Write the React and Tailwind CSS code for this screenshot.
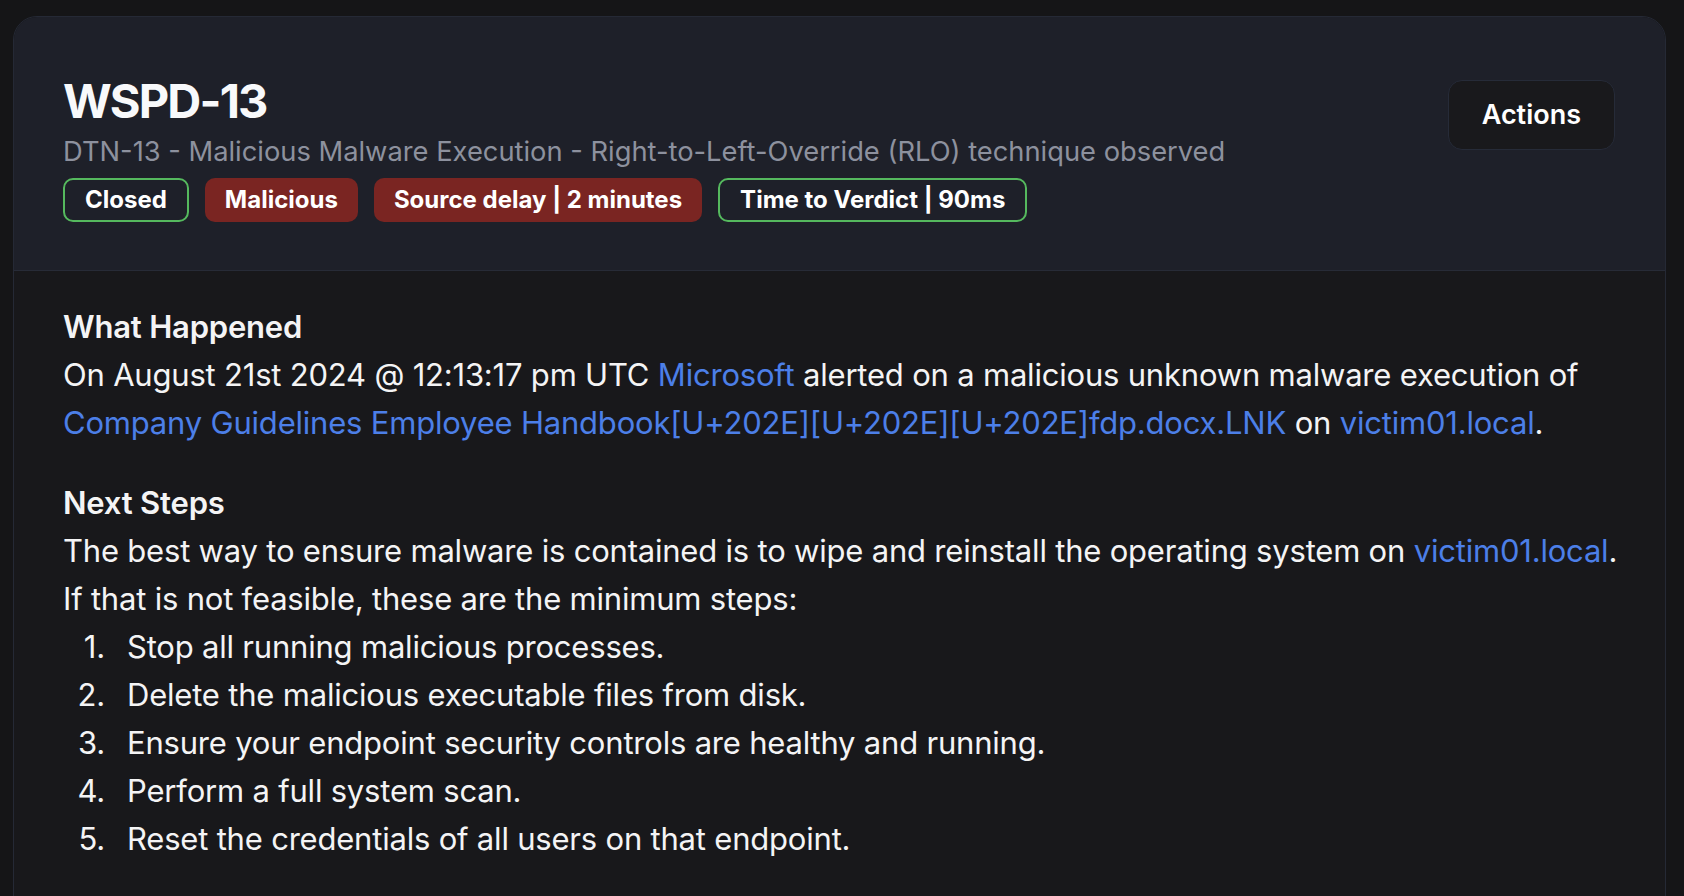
import React from 'react';

const badges = [
  { label: 'Closed', tone: 'outline' },
  { label: 'Malicious', tone: 'red' },
  { label: 'Source delay | 2 minutes', tone: 'red' },
  { label: 'Time to Verdict | 90ms', tone: 'outline' },
];

const steps = [
  'Stop all running malicious processes.',
  'Delete the malicious executable files from disk.',
  'Ensure your endpoint security controls are healthy and running.',
  'Perform a full system scan.',
  'Reset the credentials of all users on that endpoint.',
];

function Link({ children }) {
  return <span className="text-[#4c7fe8]">{children}</span>;
}

export default function App() {
  return (
    <div className="min-h-screen bg-[#151517] pt-4 pl-[13px] pr-[18px] font-['Inter',sans-serif]">
      <div className="rounded-t-[24px] border border-[#252935] overflow-hidden">
        {/* Header */}
        <div className="bg-[#1e2029] border-b border-[#272b37] flex justify-between items-start pl-[49px] pr-[50px] pt-[60px] pb-[48px]">
          <div>
            <h1 className="text-[47px] leading-none font-bold text-[#f8f9fb] tracking-[-1.8px]">WSPD-13</h1>
            <p className="mt-[12px] text-[27.3px] leading-[32px] text-[#8d919e]">
              DTN-13 - Malicious Malware Execution - Right-to-Left-Override (RLO) technique observed
            </p>
            <div className="mt-[10px] flex gap-4">
              {badges.map((b) => (
                <span
                  key={b.label}
                  className={`h-[44px] px-[20px] flex items-center rounded-[10px] text-[24px] font-bold text-white ${
                    b.tone === 'red'
                      ? 'bg-[#7a2522]'
                      : 'border-2 border-[#55b95e] bg-[#1e2029]'
                  }`}
                >
                  {b.label}
                </span>
              ))}
            </div>
          </div>
          <button className="mt-[3px] h-[70px] px-[33px] rounded-[14px] border border-[#262b38] bg-[#19191c] text-white text-[27px] font-semibold">
            Actions
          </button>
        </div>

        {/* Body */}
        <div className="bg-[#18181b] pl-[49px] pr-[24px] pt-[32px] pb-10 text-[31px] leading-[48px] text-[#f4f4f5] tracking-[-0.2px]">
          <h2 className="font-semibold">What Happened</h2>
          <p>
            On August 21st 2024 @ 12:13:17 pm UTC <Link>Microsoft</Link> alerted on a malicious unknown malware
            execution of
            <br />
            <Link>Company Guidelines Employee Handbook[U+202E][U+202E][U+202E]fdp.docx.LNK</Link> on{' '}
            <Link>victim01.local</Link>.
          </p>

          <h2 className="mt-[32px] font-semibold">Next Steps</h2>
          <p>
            The best way to ensure malware is contained is to wipe and reinstall the operating system on{' '}
            <Link>victim01.local</Link>.
          </p>
          <p>If that is not feasible, these are the minimum steps:</p>
          <ol>
            {steps.map((s, i) => (
              <li key={s} className="flex">
                <span className="w-[42px] shrink-0 text-right">{i + 1}.</span>
                <span className="pl-[22px]">{s}</span>
              </li>
            ))}
          </ol>
        </div>
      </div>
    </div>
  );
}
